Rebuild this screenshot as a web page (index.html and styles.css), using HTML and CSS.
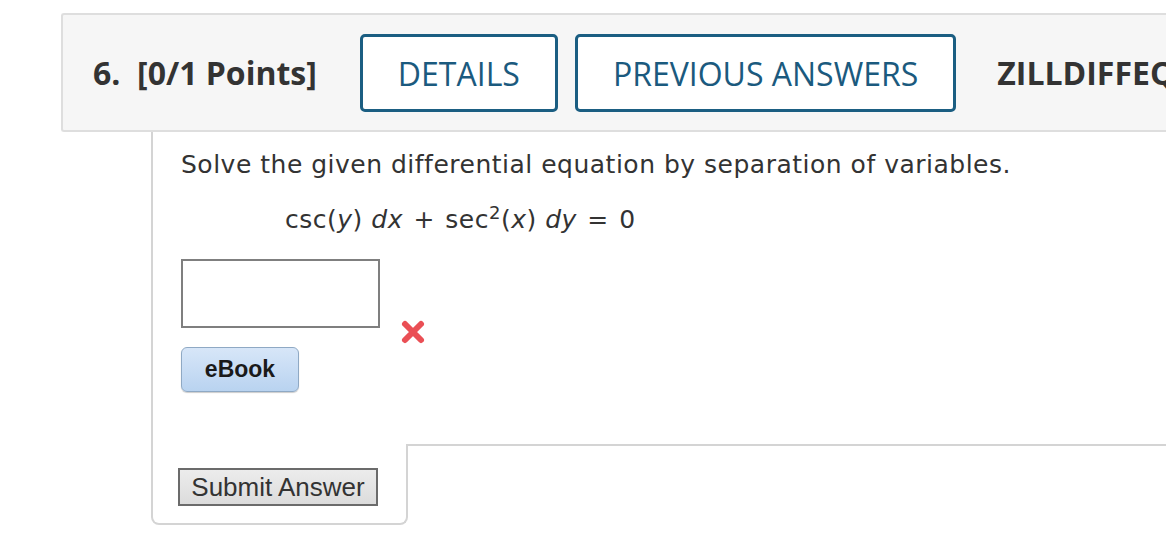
FILE: index.html
```html
<!DOCTYPE html>
<html>
<head>
<meta charset="utf-8">
<link rel="stylesheet" href="styles.css">
</head>
<body>
<div class="page">
  <div class="qhead">
    <span class="qnum">6.&nbsp; [0/1 Points]</span>
    <span class="hbtn details">DETAILS</span>
    <span class="hbtn prev">PREVIOUS ANSWERS</span>
    <span class="qsrc">ZILLDIFFEQMODAP11 2.2.007.</span>
  </div>
  <div class="qbody">
    <p class="prompt">Solve the given differential equation by separation of variables.</p>
    <p class="eq">csc(<i>y</i>) <i>dx</i> <span class="op">+</span> sec<sup>2</sup>(<i>x</i>) <i>dy</i> <span class="op">=</span> 0</p>
    <div class="answer-row">
      <span class="answer-box"></span>
      <svg class="wrong" width="26" height="26" viewBox="0 0 26 26">
        <path d="M5 5 L21 21 M21 5 L5 21" stroke="#ea4f55" stroke-width="6" stroke-linecap="round"/>
      </svg>
    </div>
    <div class="ebook">eBook</div>
  </div>
  <div class="submit-row">
    <div class="submit-tab">
      <button class="submit">Submit Answer</button>
    </div>
    <div class="submit-rest"></div>
  </div>
</div>
</body>
</html>
```
FILE: styles.css
```css
html, body {
  margin: 0;
  padding: 0;
  background: #ffffff;
}
.page {
  width: 1166px;
  height: 548px;
  overflow: hidden;
  padding-top: 13px;
  box-sizing: border-box;
}
.qhead {
  margin-left: 61px;
  height: 119px;
  box-sizing: border-box;
  background: #f6f6f6;
  border: 2px solid #dedede;
  border-right: none;
  border-radius: 3px 0 0 3px;
  display: flex;
  align-items: center;
  padding-left: 30px;
  white-space: nowrap;
  font-family: "Open Sans", sans-serif;
  font-size: 32px;
}
.qnum {
  font-weight: 700;
  color: #333333;
  margin-right: 43px;
}
.hbtn {
  display: inline-flex;
  align-items: center;
  height: 78px;
  box-sizing: border-box;
  border: 3px solid #1b5e82;
  border-radius: 5px;
  padding: 0 35px;
  color: #1b5a7e;
  background: #ffffff;
  margin-top: 1px;
}
.details {
  margin-right: 17px;
}
.prev {
  margin-right: 41px;
}
.qsrc {
  font-weight: 700;
  color: #333333;
}
.qbody {
  margin-left: 151px;
  border-left: 2px solid #d4d4d4;
  padding: 14px 0 0 28px;
  height: 312px;
  box-sizing: border-box;
  font-family: "DejaVu Sans", Verdana, sans-serif;
  color: #333333;
}
.prompt {
  margin: 0;
  font-size: 25px;
  letter-spacing: 0.5px;
  line-height: 38px;
}
.eq {
  margin: 17px 0 0 104px;
  font-size: 25px;
  letter-spacing: 0.5px;
  line-height: 38px;
}
.eq .op {
  margin: 0 2px;
}
.eq sup {
  font-size: 18px;
  line-height: 0;
}
.answer-row {
  display: flex;
  align-items: flex-end;
  margin-top: 20px;
}
.answer-box {
  display: block;
  width: 199px;
  height: 69px;
  box-sizing: border-box;
  border: 2px solid #7f7f7f;
  background: #ffffff;
}
.wrong {
  margin-left: 20px;
  margin-bottom: -17px;
}
.ebook {
  margin-top: 19px;
  width: 118px;
  height: 45px;
  box-sizing: border-box;
  border: 1px solid #8fa9c4;
  border-radius: 6px;
  background: linear-gradient(#d7e6f8, #b9d3f0);
  box-shadow: 0 1px 1px rgba(0,0,0,0.2);
  display: flex;
  align-items: center;
  justify-content: center;
  font-family: "Liberation Sans", Arial, sans-serif;
  font-weight: 700;
  font-size: 23px;
  color: #1a1a1a;
}
.submit-row {
  display: flex;
  margin-left: 151px;
}
.submit-tab {
  width: 257px;
  height: 81px;
  box-sizing: border-box;
  border: 2px solid #d4d4d4;
  border-top: none;
  border-radius: 0 0 8px 8px;
  padding: 24px 0 0 26px;
}
.submit-rest {
  flex: 1;
  border-top: 2px solid #d4d4d4;
}
.submit {
  width: 200px;
  height: 38px;
  box-sizing: border-box;
  border: 2px solid #6b6b6b;
  border-radius: 0;
  background: linear-gradient(#ececec, #dcdcdc);
  font-family: "Liberation Sans", Arial, sans-serif;
  font-size: 26px;
  color: #333333;
  padding: 0;
  margin-left: -1px;
}
```
